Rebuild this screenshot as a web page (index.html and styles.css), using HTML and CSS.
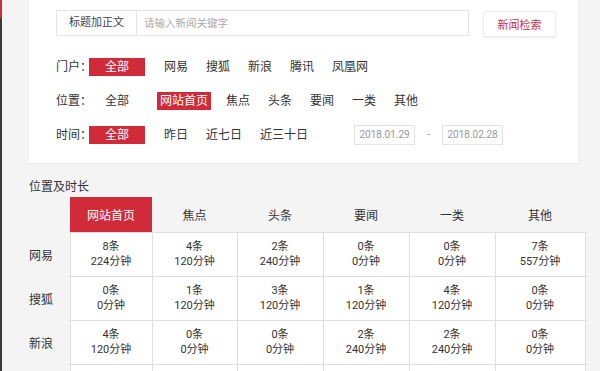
FILE: index.html
```html
<!DOCTYPE html>
<html lang="zh-CN">
<head>
<meta charset="utf-8">
<title>新闻检索</title>
<link rel="stylesheet" href="styles.css">
</head>
<body>
<div class="page">
  <div class="rail"><div class="rail-accent"></div></div>
  <main class="main">
    <section class="card">
      <div class="search">
        <div class="scope">标题加正文</div>
        <input class="keyword" type="text" placeholder="请输入新闻关键字">
        <button class="search-btn" type="button">新闻检索</button>
      </div>
      <div class="filters">
        <div class="filter-row spaced">
          <span class="filter-label">门户：</span>
          <span class="chip chip-all active">全部</span>
          <span class="chip">网易</span>
          <span class="chip">搜狐</span>
          <span class="chip">新浪</span>
          <span class="chip">腾讯</span>
          <span class="chip">凤凰网</span>
        </div>
        <div class="filter-row">
          <span class="filter-label">位置：</span>
          <span class="chip chip-all">全部</span>
          <span class="chip active">网站首页</span>
          <span class="chip">焦点</span>
          <span class="chip">头条</span>
          <span class="chip">要闻</span>
          <span class="chip">一类</span>
          <span class="chip">其他</span>
        </div>
        <div class="filter-row spaced">
          <span class="filter-label">时间：</span>
          <span class="chip chip-all active">全部</span>
          <span class="chip">昨日</span>
          <span class="chip">近七日</span>
          <span class="chip">近三十日</span>
          <span class="date-range">
            <span class="date">2018.01.29</span>
            <span class="date-sep">-</span>
            <span class="date">2018.02.28</span>
          </span>
        </div>
      </div>
    </section>

    <section class="stats">
      <h3 class="stats-title">位置及时长</h3>
      <table class="grid">
        <colgroup>
          <col class="c-label">
          <col class="c1"><col class="c2"><col class="c3"><col class="c4"><col class="c5"><col class="c6">
        </colgroup>
        <thead>
          <tr>
            <th></th>
            <th class="active">网站首页</th>
            <th>焦点</th>
            <th>头条</th>
            <th>要闻</th>
            <th>一类</th>
            <th>其他</th>
          </tr>
        </thead>
        <tbody>
          <tr>
            <th class="row-label">网易</th>
            <td>8条<br>224分钟</td>
            <td>4条<br>120分钟</td>
            <td>2条<br>240分钟</td>
            <td>0条<br>0分钟</td>
            <td>0条<br>0分钟</td>
            <td>7条<br>557分钟</td>
          </tr>
          <tr>
            <th class="row-label">搜狐</th>
            <td>0条<br>0分钟</td>
            <td>1条<br>120分钟</td>
            <td>3条<br>120分钟</td>
            <td>1条<br>120分钟</td>
            <td>4条<br>120分钟</td>
            <td>0条<br>0分钟</td>
          </tr>
          <tr>
            <th class="row-label">新浪</th>
            <td>4条<br>120分钟</td>
            <td>0条<br>0分钟</td>
            <td>0条<br>0分钟</td>
            <td>2条<br>240分钟</td>
            <td>2条<br>240分钟</td>
            <td>0条<br>0分钟</td>
          </tr>
          <tr>
            <th class="row-label"></th>
            <td></td><td></td><td></td><td></td><td></td><td></td>
          </tr>
        </tbody>
      </table>
    </section>
  </main>
</div>
</body>
</html>
```

FILE: styles.css
```css
* { box-sizing: border-box; }

html, body {
  margin: 0;
  padding: 0;
  background: #f4f4f4;
  color: #333;
  font-family: Roboto, "Noto Sans CJK SC", sans-serif;
  font-size: 12px;
  overflow: hidden;
}

.page {
  display: flex;
  min-height: 371px;
}

.rail {
  width: 2px;
  flex: none;
  background: #3a3a3a;
}

.rail-accent {
  height: 18px;
  background: #d12b3a;
}

.main {
  flex: 1;
  padding-left: 27px;
}

/* ---------- card ---------- */
.card {
  width: 549px;
  background: #fff;
  padding: 10px 0 19px 27px;
  box-shadow: 0 1px 2px rgba(0, 0, 0, 0.06);
}

.search {
  display: flex;
  align-items: flex-start;
}

.scope {
  width: 81px;
  height: 26px;
  line-height: 24px;
  border: 1px solid #e3e3e3;
  text-align: center;
  font-size: 11px;
  color: #444;
}

.keyword {
  width: 332px;
  height: 26px;
  margin: 0;
  border: 1px solid #e3e3e3;
  border-left: none;
  padding: 0 7px;
  font-family: inherit;
  font-size: 10.5px;
  color: #333;
  outline: none;
}

.keyword::placeholder { color: #aaa; }

.search-btn {
  width: 73px;
  height: 26px;
  margin: 1px 0 0 14px;
  padding: 0;
  border: 1px solid #ececec;
  background: #fff;
  box-shadow: 0 1px 2px rgba(0, 0, 0, 0.08);
  border-radius: 2px;
  color: #c5323f;
  font-family: inherit;
  font-size: 11px;
}

/* ---------- filters ---------- */
.filters {
  display: flex;
  flex-direction: column;
  gap: 16px;
  margin-top: 21px;
}

.filter-row {
  display: flex;
  align-items: center;
  gap: 12px;
  height: 18px;
  line-height: 18px;
}

.filter-label {
  width: 33px;
  margin-right: -12px;
  white-space: nowrap;
  color: #333;
}

.chip {
  padding: 0 3px;
  color: #333;
  white-space: nowrap;
}

.chip-all {
  width: 56px;
  text-align: center;
}

.spaced .chip-all { margin-right: 4px; }

.chip.active {
  background: #d12b3a;
  color: #fff;
}

.date-range {
  display: flex;
  align-items: center;
  margin-left: 31px;
}

.date {
  width: 61px;
  height: 20px;
  line-height: 18px;
  border: 1px solid #e2e2e2;
  text-align: center;
  font-size: 10px;
  color: #999;
}

.date-sep {
  width: 27px;
  text-align: center;
  color: #999;
  font-size: 10px;
}

/* ---------- stats ---------- */
.stats-title {
  margin: 16px 0 2px;
  font-size: 12px;
  font-weight: normal;
  line-height: 16px;
  color: #333;
}

.grid {
  border-collapse: collapse;
  table-layout: fixed;
  width: 556px;
}

.c-label { width: 41px; }
.c1 { width: 82px; }
.c2 { width: 85px; }
.c3 { width: 86px; }
.c4 { width: 86px; }
.c5 { width: 86px; }
.c6 { width: 90px; }

.grid thead th {
  height: 35px;
  padding: 0;
  font-weight: normal;
  font-size: 12px;
  color: #333;
  text-align: center;
}

.grid thead th.active {
  background: #d12b3a;
  color: #fff;
}

.grid tbody tr { height: 44px; }

.grid .row-label {
  padding: 0;
  text-align: left;
  font-weight: normal;
  font-size: 12px;
  color: #333;
}

.grid td {
  padding: 0;
  background: #fff;
  border: 1px solid #dedede;
  text-align: center;
  vertical-align: middle;
  font-size: 11px;
  line-height: 15px;
  color: #333;
}
```
